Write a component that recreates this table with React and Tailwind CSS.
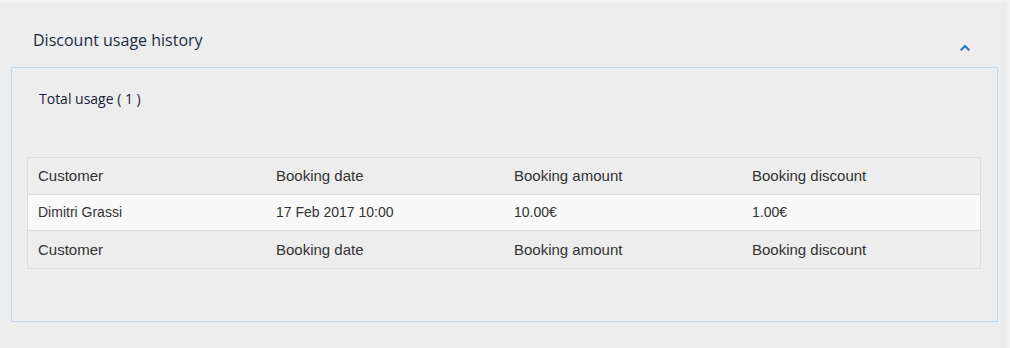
const rows = [
  { customer: "Dimitri Grassi", date: "17 Feb 2017 10:00", amount: "10.00€", discount: "1.00€" },
];

const columns = ["Customer", "Booking date", "Booking amount", "Booking discount"];

function ChevronUp() {
  return (
    <svg width="10" height="7" viewBox="0 0 10 7" fill="none" stroke="#2f72c0" strokeWidth="2.2" strokeLinecap="square">
      <path d="M1.5 5.5 5 2l3.5 3.5" />
    </svg>
  );
}

function HeadRow() {
  return (
    <div className="grid h-[37px] grid-cols-4 items-center border-b border-[#dddddd] last:border-b-0 pt-[1px] text-[15px] text-[#333333]">
      {columns.map((c) => (
        <div key={c} className="pl-[10px]">{c}</div>
      ))}
    </div>
  );
}

export default function App() {
  return (
    <div className="h-[348px] w-[1010px] overflow-hidden border-t-[3px] border-r-[3px] border-[#f2f2f2] bg-[#ededed] font-['Liberation_Sans',Arial,sans-serif]">
      <div className="flex h-[64px] items-start justify-between pl-[33px] pr-[37px] pt-[27px]">
        <h2 className="font-['Open_Sans',sans-serif] text-[16px] leading-[20px] text-[#1c2c44]">Discount usage history</h2>
        <div className="mt-[14px]">
          <ChevronUp />
        </div>
      </div>

      {/* collapsible panel body */}
      <div className="mx-[11px] h-[255px] w-[987px] border border-[#bcd9f1] px-[15px] pt-[22px]">
        <div className="pl-[12px] font-['Open_Sans',sans-serif] text-[14px] leading-[18px] text-[#18223a]">Total usage ( 1 )</div>

        <div className="mt-[49px] w-[954px] border border-[#dddddd]">
          <HeadRow />
          {rows.map((r) => (
            <div key={r.customer} className="grid h-[36px] grid-cols-4 items-center border-b border-[#dddddd] bg-[#f9f9f9] text-[14px] text-[#333333]">
              <div className="pl-[10px]">{r.customer}</div>
              <div className="pl-[10px]">{r.date}</div>
              <div className="pl-[10px]">{r.amount}</div>
              <div className="pl-[10px]">{r.discount}</div>
            </div>
          ))}
          <HeadRow />
        </div>
      </div>
    </div>
  );
}
